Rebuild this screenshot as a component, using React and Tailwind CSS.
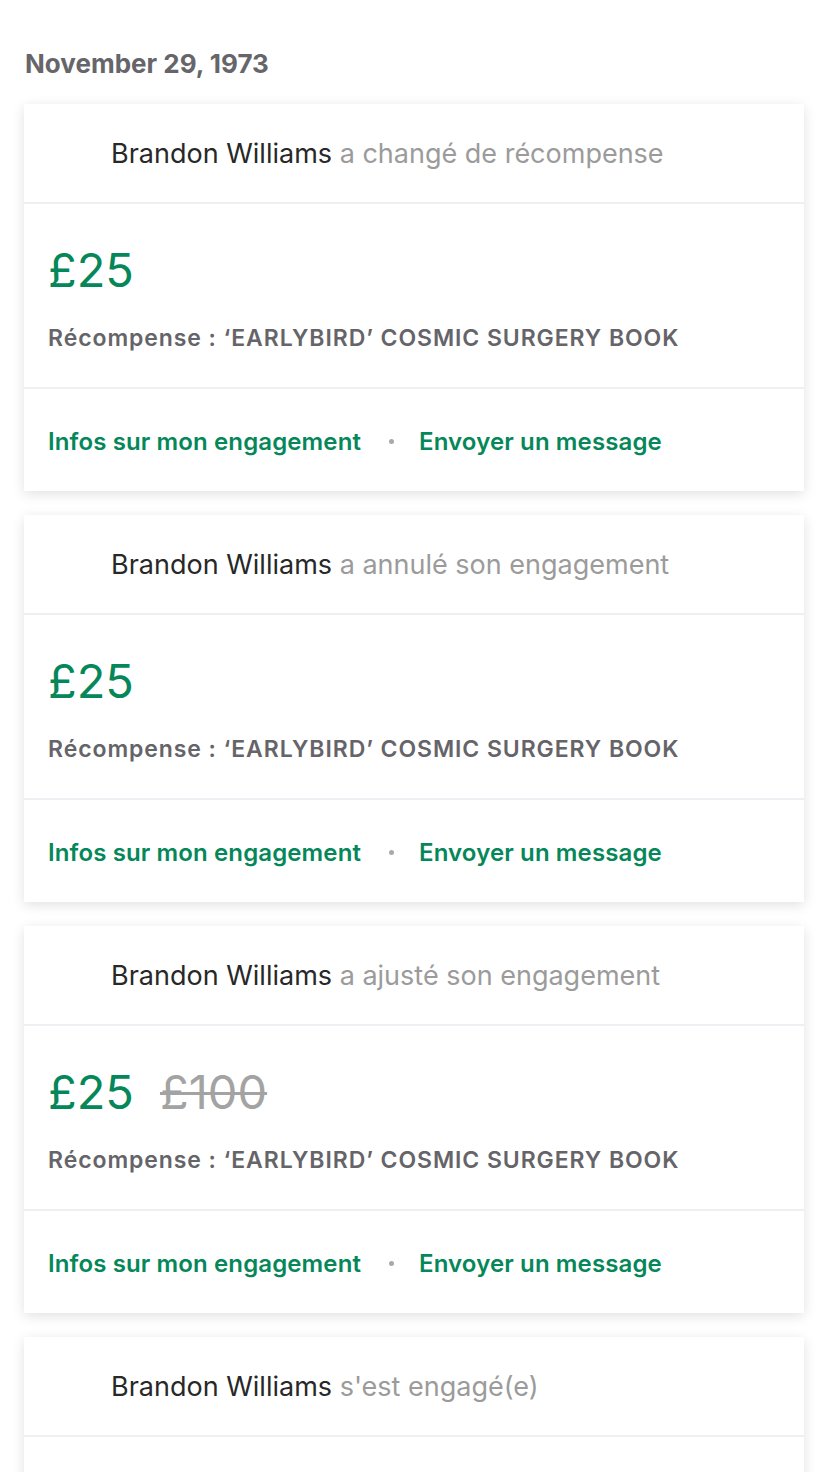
const cards = [
  { action: 'a changé de récompense', amount: '£25' },
  { action: 'a annulé son engagement', amount: '£25' },
  { action: 'a ajusté son engagement', amount: '£25', old: '£100' },
  { action: "s'est engagé(e)", amount: '£25' },
];

const ActivityCard = ({ action, amount, old }) => (
  <div className="bg-white shadow-[0_3px_12px_rgba(0,0,0,0.12)]">
    {/* Header */}
    <div className="h-[100px] flex items-center pl-[87px] border-b-2 border-[#efeff3]">
      <p className="text-[27px] leading-none">
        <span className="text-[#282828]">Brandon Williams</span>{' '}
        <span className="text-[#9b9b9b]">{action}</span>
      </p>
    </div>

    {/* Body */}
    <div className="h-[185px] px-6 pt-[42px] border-b-2 border-[#efeff3]">
      <div className="flex items-baseline gap-[26px] text-[47px] leading-none">
        <span className="text-[#05875a]">{amount}</span>
        {old && <span className="text-[#a3a3a3] line-through decoration-[3px]">{old}</span>}
      </div>
      <p className="mt-[34px] text-[23px] font-semibold tracking-[0.04em] text-[#656469] leading-none">
        Récompense : ‘EARLYBIRD’ COSMIC SURGERY BOOK
      </p>
    </div>

    {/* Footer */}
    <div className="h-[102px] px-6 pt-[3px] flex items-center text-[24px] font-semibold tracking-[0.005em] text-[#05875a]">
      <span>Infos sur mon engagement</span>
      <span className="ml-[28px] mr-[25px] w-[5px] h-[5px] rounded-full bg-[#a9a9a9]" />
      <span>Envoyer un message</span>
    </div>
  </div>
);

export default function App() {
  return (
    <div className="min-h-screen bg-white px-6 pt-[49px] pb-10 font-['Inter',sans-serif]">
      <h1 className="pl-px text-[26px] font-bold text-[#66656a] leading-[30px]">November 29, 1973</h1>
      <div className="mt-[25px] flex flex-col gap-6">
        {cards.map((c, i) => (
          <ActivityCard key={i} {...c} />
        ))}
      </div>
    </div>
  );
}
